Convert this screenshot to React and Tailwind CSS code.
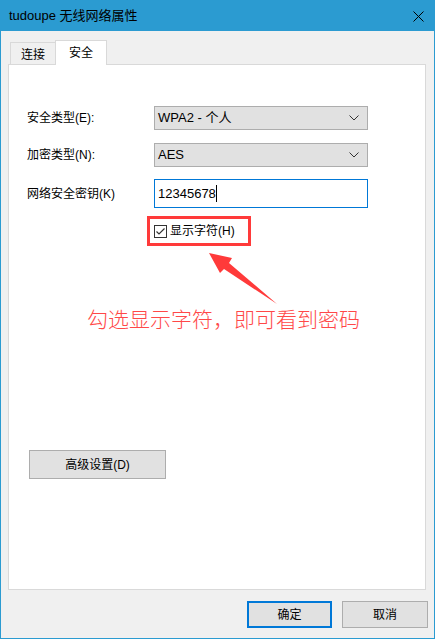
import React from 'react';

function Chevron() {
  return (
    <svg width="10" height="6" viewBox="0 0 10 6" className="mr-[8px]">
      <polyline points="0.5,0.5 5,5 9.5,0.5" fill="none" stroke="#333" strokeWidth="1" />
    </svg>
  );
}

function Select({ value }) {
  return (
    <div className="w-[214px] h-[24px] bg-[#e1e1e1] border border-[#adadad] flex items-center justify-between pl-[3px] text-[13px]">
      <span>{value}</span>
      <Chevron />
    </div>
  );
}

export default function App() {
  return (
    <div className="relative w-[435px] h-[639px] border border-[#2b9bd1] bg-[#f0f0f0] flex flex-col font-['Liberation_Sans','Noto_Sans_CJK_SC',sans-serif] text-[12px] text-black overflow-hidden">
      {/* Title bar */}
      <div className="h-[30px] bg-[#2b9bd1] flex items-center justify-between pl-[8px] pr-[10px]">
        <span className="text-[13px]">tudoupe 无线网络属性</span>
        <svg width="11" height="11" viewBox="0 0 11 11">
          <path d="M0.5 0.5 L10.5 10.5 M10.5 0.5 L0.5 10.5" stroke="#000" strokeWidth="1" />
        </svg>
      </div>

      {/* Tabs */}
      <div className="h-[33px] flex items-end pl-[9px]">
        <div className="w-[46px] h-[22px] border border-b-0 border-[#d9d9d9] flex items-center justify-center pt-[2px]">连接</div>
        <div className="relative z-10 -mb-px w-[52px] h-[25px] bg-white border border-b-0 border-[#d9d9d9] -ml-px flex items-start justify-center pt-[3px]">安全</div>
      </div>

      {/* Panel */}
      <div className="relative ml-[7px] w-[418px] h-[526px] border border-[#d9d9d9] bg-white flex flex-col pt-[41px]">
        <div className="flex items-center pl-[18px]">
          <span className="w-[127px]">安全类型(E):</span>
          <Select value="WPA2 - 个人" />
        </div>
        <div className="flex items-center pl-[18px] mt-[13px]">
          <span className="w-[127px]">加密类型(N):</span>
          <Select value="AES" />
        </div>
        <div className="flex items-center pl-[18px] mt-[12px]">
          <span className="w-[127px]">网络安全密钥(K)</span>
          <div className="w-[214px] h-[29px] border border-[#0078d7] flex items-center pl-[3px] text-[13px]">
            <span>12345678</span>
            <span className="w-px h-[17px] bg-black" />
          </div>
        </div>

        {/* highlighted checkbox */}
        <div className="ml-[138px] mt-[8px] w-[104px] h-[30px] border-[3px] border-[#ff3a3a] flex items-center pl-[4px] gap-[3px]">
          <svg width="13" height="13" viewBox="0 0 13 13">
            <rect x="0.5" y="0.5" width="12" height="12" fill="#fff" stroke="#333" />
            <polyline points="2.5,6.5 5,9 10.5,3.5" fill="none" stroke="#333" strokeWidth="1.2" />
          </svg>
          <span className="text-[12px]">显示字符(H)</span>
        </div>

        <div className="ml-[78px] mt-[58px] text-[21px] leading-[28px] text-[#ff4848] font-['Noto_Sans_CJK_SC',sans-serif] font-light">
          勾选显示字符，即可看到密码
        </div>

        <div className="ml-[20px] mt-[118px] w-[137px] h-[29px] bg-[#e1e1e1] border border-[#adadad] flex items-center justify-center">
          高级设置(D)
        </div>
      </div>

      {/* Bottom buttons */}
      <div className="flex justify-end gap-[10px] pr-[6px] mt-[11px]">
        <div className="w-[85px] h-[27px] bg-[#e1e1e1] border-2 border-[#0078d7] flex items-center justify-center">确定</div>
        <div className="w-[86px] h-[27px] bg-[#e1e1e1] border border-[#adadad] flex items-center justify-center">取消</div>
      </div>

      {/* annotation arrow */}
      <svg className="absolute left-[-1px] top-[-1px] pointer-events-none" width="435" height="639" viewBox="0 0 435 639">
        <polygon points="209,253 232,258 229,263 277,304 224,269 220,273" fill="#ff3a3a" />
      </svg>
    </div>
  );
}
